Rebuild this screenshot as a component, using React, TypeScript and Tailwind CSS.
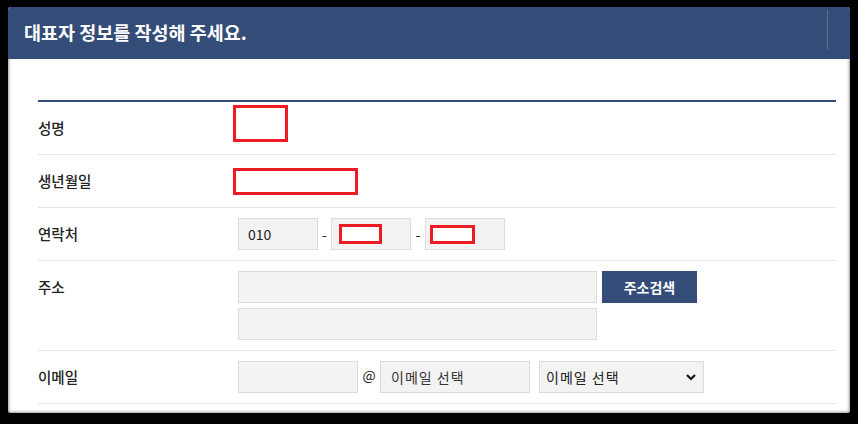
import React from "react";

const FONT = { fontFamily: '"Noto Sans CJK KR", "Noto Sans", sans-serif' };

function RedBox({ className }: { className: string }) {
  return <div className={"absolute border-[3px] border-[#ed1c24] bg-white " + className} />;
}

function Row({ label, children, tall }: { label: string; children: React.ReactNode; tall?: boolean }) {
  return (
    <div className="flex border-b border-[#e6e6e6] py-[10px]">
      <div className="w-[200px] h-[32px] flex items-center text-[14.5px] font-medium text-[#222] shrink-0">{label}</div>
      <div className={"flex-1 relative " + (tall ? "flex flex-col gap-[5px]" : "flex items-center h-[32px]")}>
        {children}
      </div>
    </div>
  );
}

const inputCls =
  "h-[32px] bg-[#f3f3f3] border border-[#dcdcdc] flex items-center text-[14px] text-[#222] relative";

export default function App() {
  return (
    <div className="w-[858px] h-[424px] bg-black pt-[7px] pl-[8px]" style={FONT}>
      <div className="w-[842px] h-[406px] bg-white flex flex-col rounded-[3px] overflow-hidden">
        <div className="h-[52px] bg-[#344c78] flex justify-between shrink-0">
          <div className="pl-[16px] flex items-center text-white font-bold text-[18.5px]">
            대표자 정보를 작성해 주세요.
          </div>
          <div className="w-px h-[40px] bg-[#5b6d93] mt-[3px] mr-[22px]" />
        </div>
        <div className="flex-1 pl-[30px] pr-[14px] pt-[41px] shadow-[inset_3px_0_3px_-2px_#999,inset_-3px_0_3px_-2px_#999,inset_0_-3px_3px_-2px_#999]">
          <div className="border-t-2 border-[#344c78]">
            <Row label="성명">
              <RedBox className="left-[-5px] top-[-7px] w-[55px] h-[37px]" />
            </Row>
            <Row label="생년월일">
              <RedBox className="left-[-5px] top-[3px] w-[125px] h-[27px]" />
            </Row>
            <Row label="연락처">
              <div className={inputCls + " w-[80px] pl-[9px]"}>010</div>
              <span className="w-[13px] text-center text-[14px] text-[#222]">-</span>
              <div className={inputCls + " w-[80px]"}>
                <RedBox className="left-[7px] top-[5px] w-[43px] h-[20px]" />
              </div>
              <span className="w-[14px] text-center text-[14px] text-[#222]">-</span>
              <div className={inputCls + " w-[80px]"}>
                <RedBox className="left-[4px] top-[6px] w-[45px] h-[19px]" />
              </div>
            </Row>
            <Row label="주소" tall>
              <div className="flex gap-[5px]">
                <div className={inputCls + " w-[359px]"} />
                <div className="w-[95px] h-[32px] bg-[#344c78] text-white font-bold text-[14px] flex items-center justify-center">
                  주소검색
                </div>
              </div>
              <div className={inputCls + " w-[359px]"} />
            </Row>
            <Row label="이메일">
              <div className={inputCls + " w-[120px]"} />
              <span className="w-[22px] text-center text-[14px] text-[#222] -mt-[3px]">@</span>
              <div className={inputCls + " w-[150px] pl-[10px] text-[#333] tracking-[1px]"}>이메일 선택</div>
              <div className={inputCls + " w-[165px] ml-[9px] pl-[6px] pr-[6px] justify-between text-[#222] tracking-[1px]"}>
                <span>이메일 선택</span>
                <svg width="12" height="12" viewBox="0 0 12 12">
                  <path d="M2 4 L6 8 L10 4" fill="none" stroke="#111" strokeWidth="2.2" />
                </svg>
              </div>
            </Row>
          </div>
        </div>
      </div>
    </div>
  );
}
